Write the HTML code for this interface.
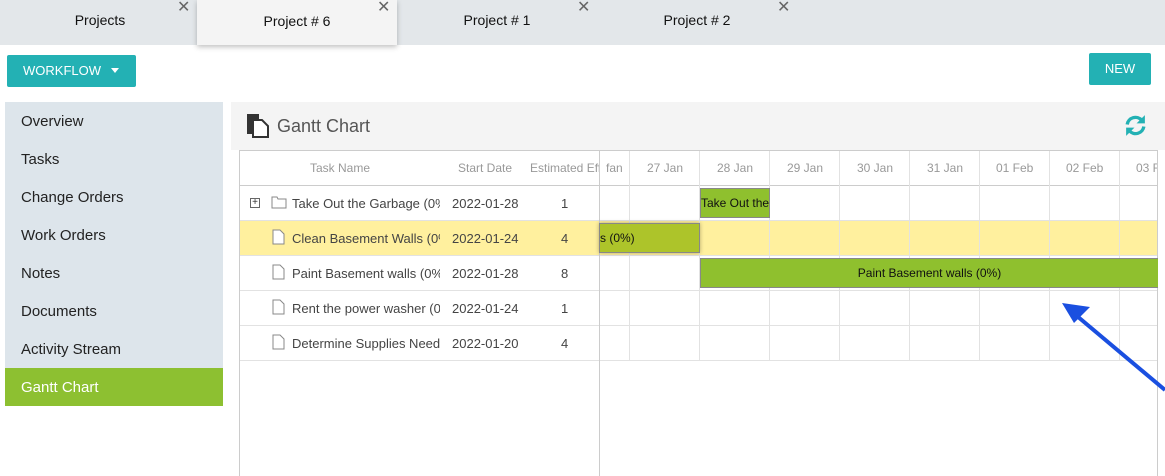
<!DOCTYPE html>
<html style="overflow:hidden;height:476px"><head><style>
*{margin:0;padding:0;box-sizing:border-box}
body{width:1165px;height:476px;overflow:hidden;background:#fff;font-family:"Liberation Sans",Arial,sans-serif;position:relative;color:#333}
.abs{position:absolute}
.tabbar{left:0;top:0;width:1165px;height:45px;background:#e3e7ea}
.tab{top:0;width:200px;height:45px;text-align:center;font-size:14px;line-height:40px;color:#111}
.x{font-size:16px;color:#666;top:-3px}
.side{left:5px;top:102px;width:218px;height:304px;background:#dde5eb}
.si{left:5px;width:218px;height:38px;font-size:15px;line-height:40px;padding-left:16px;color:#222}
.cell{position:absolute;font-size:13px;color:#444;white-space:nowrap;overflow:hidden}
.h{font-size:12px;color:#999}
.vl{position:absolute;width:1px;background:#e2e2e2}
.hl{position:absolute;height:1px;background:#e2e2e2}
.bar{position:absolute;height:30px;border:1px solid #888;font-size:12px;line-height:28px;color:#111;white-space:nowrap;overflow:hidden}
</style></head><body>
<div class="abs tabbar"></div>
<div class="abs tab" style="left:0">Projects</div>
<div class="abs tab" style="left:197px;background:#f4f4f4;box-shadow:0 2px 5px rgba(0,0,0,.25);line-height:42px">Project # 6</div>
<div class="abs tab" style="left:397px">Project # 1</div>
<div class="abs tab" style="left:597px">Project # 2</div>
<div class="abs x" style="left:177px">✕</div>
<div class="abs x" style="left:377px">✕</div>
<div class="abs x" style="left:577px">✕</div>
<div class="abs x" style="left:777px">✕</div>

<div class="abs" style="left:7px;top:55px;width:129px;height:32px;background:#23b1b4;color:#fff;font-size:13px;line-height:32px;padding-left:16px;border-radius:2px">WORKFLOW <span style="display:inline-block;margin-left:6px;border-left:4px solid transparent;border-right:4px solid transparent;border-top:5px solid #fff;vertical-align:2px"></span></div>
<div class="abs" style="left:1089px;top:53px;width:62px;height:32px;background:#23b1b4;color:#fff;font-size:13px;line-height:32px;text-align:center;border-radius:2px">NEW</div>

<div class="abs side"></div>
<div class="abs si" style="top:102px">Overview</div>
<div class="abs si" style="top:140px">Tasks</div>
<div class="abs si" style="top:178px">Change Orders</div>
<div class="abs si" style="top:216px">Work Orders</div>
<div class="abs si" style="top:254px">Notes</div>
<div class="abs si" style="top:292px">Documents</div>
<div class="abs si" style="top:330px">Activity Stream</div>
<div class="abs si" style="top:368px;background:#8dc031;color:#fff">Gantt Chart</div>

<div class="abs" style="left:231px;top:102px;width:934px;height:48px;background:#f4f4f4"></div>
<svg class="abs" style="left:246px;top:114px" width="26" height="24" viewBox="0 0 26 24"><rect x="1" y="0" width="12" height="20" fill="#333"/><path d="M7 6h9l6 6v11H7z" fill="#fff" stroke="#333" stroke-width="2"/></svg>
<div class="abs" style="left:277px;top:116px;font-size:18px;color:#555">Gantt Chart</div>
<svg class="abs" style="left:1123px;top:113px" width="25" height="25" viewBox="0 0 24 24"><path d="M4 11a8 8 0 0 1 14-4" fill="none" stroke="#23b1b4" stroke-width="3.2"/><path d="M21 2v8h-8z" fill="#23b1b4"/><path d="M20 13a8 8 0 0 1-14 4" fill="none" stroke="#23b1b4" stroke-width="3.2"/><path d="M3 22v-8h8z" fill="#23b1b4"/></svg>

<div class="abs" style="left:239px;top:150px;width:919px;height:326px;border:1px solid #ccc;border-bottom:none"></div>
<div class="abs" style="left:240px;top:220px;width:917px;height:35px;background:#fff09e"></div>
<div class="hl" style="left:240px;top:185px;width:917px;background:#ccc"></div>
<div class="hl" style="left:240px;top:220px;width:917px"></div>
<div class="hl" style="left:240px;top:255px;width:917px"></div>
<div class="hl" style="left:240px;top:290px;width:917px"></div>
<div class="hl" style="left:240px;top:325px;width:917px"></div>
<div class="hl" style="left:240px;top:360px;width:917px"></div>
<div class="vl" style="left:599px;top:151px;height:325px;background:#ccc"></div>
<div class="vl" style="left:629px;top:151px;height:209px"></div>
<div class="vl" style="left:699px;top:151px;height:209px"></div>
<div class="vl" style="left:769px;top:151px;height:209px"></div>
<div class="vl" style="left:839px;top:151px;height:209px"></div>
<div class="vl" style="left:909px;top:151px;height:209px"></div>
<div class="vl" style="left:979px;top:151px;height:209px"></div>
<div class="vl" style="left:1049px;top:151px;height:209px"></div>
<div class="vl" style="left:1119px;top:151px;height:209px"></div>

<div class="cell h" style="left:310px;top:161px">Task Name</div>
<div class="cell h" style="left:458px;top:161px">Start Date</div>
<div class="cell h" style="left:530px;top:161px;width:69px">Estimated Effort</div>
<div class="cell h" style="left:606px;top:161px;width:23px">fan</div>
<div class="cell h" style="left:647px;top:161px">27 Jan</div>
<div class="cell h" style="left:717px;top:161px">28 Jan</div>
<div class="cell h" style="left:787px;top:161px">29 Jan</div>
<div class="cell h" style="left:857px;top:161px">30 Jan</div>
<div class="cell h" style="left:927px;top:161px">31 Jan</div>
<div class="cell h" style="left:996px;top:161px">01 Feb</div>
<div class="cell h" style="left:1066px;top:161px">02 Feb</div>
<div class="cell h" style="left:1136px;top:161px;width:21px">03 Feb</div>

<div class="abs" style="left:250px;top:198px;width:10px;height:10px;border:1px solid #666;font-size:10px;line-height:8px;text-align:center">+</div>
<svg class="abs" style="left:271px;top:195px" width="16" height="14"><path d="M1 2h5l1 2h8v9H1z" fill="#fff" stroke="#888"/></svg>
<svg class="abs" style="left:272px;top:229px" width="13" height="16"><path d="M1 1h7l4 4v10H1z" fill="#fff" stroke="#888"/></svg>
<svg class="abs" style="left:272px;top:264px" width="13" height="16"><path d="M1 1h7l4 4v10H1z" fill="#fff" stroke="#888"/></svg>
<svg class="abs" style="left:272px;top:299px" width="13" height="16"><path d="M1 1h7l4 4v10H1z" fill="#fff" stroke="#888"/></svg>
<svg class="abs" style="left:272px;top:334px" width="13" height="16"><path d="M1 1h7l4 4v10H1z" fill="#fff" stroke="#888"/></svg>

<div class="cell" style="left:292px;top:196px;width:148px">Take Out the Garbage (0%)</div>
<div class="cell" style="left:292px;top:231px;width:148px">Clean Basement Walls (0%)</div>
<div class="cell" style="left:292px;top:266px;width:148px">Paint Basement walls (0%)</div>
<div class="cell" style="left:292px;top:301px;width:148px">Rent the power washer (0%)</div>
<div class="cell" style="left:292px;top:336px;width:148px">Determine Supplies Needed</div>
<div class="cell" style="left:452px;top:196px">2022-01-28</div>
<div class="cell" style="left:452px;top:231px">2022-01-24</div>
<div class="cell" style="left:452px;top:266px">2022-01-28</div>
<div class="cell" style="left:452px;top:301px">2022-01-24</div>
<div class="cell" style="left:452px;top:336px">2022-01-20</div>
<div class="cell" style="left:561px;top:196px">1</div>
<div class="cell" style="left:561px;top:231px">4</div>
<div class="cell" style="left:561px;top:266px">8</div>
<div class="cell" style="left:561px;top:301px">1</div>
<div class="cell" style="left:561px;top:336px">4</div>

<div class="bar" style="left:700px;top:188px;width:70px;background:#8fc02e">Take Out the Garbage</div>
<div class="bar" style="left:599px;top:223px;width:101px;background:#adc42a;box-shadow:0 0 4px rgba(0,0,0,.3)">s (0%)</div>
<div class="bar" style="left:700px;top:258px;width:458px;background:#8fc02e;text-align:center;border-right:none">Paint Basement walls (0%)</div>

<svg class="abs" style="left:1055px;top:295px" width="110" height="100"><line x1="110" y1="95" x2="16" y2="16" stroke="#1a4fe0" stroke-width="4"/><path d="M7 8l28 4l-16 16z" fill="#1a4fe0"/></svg>
</body></html>
